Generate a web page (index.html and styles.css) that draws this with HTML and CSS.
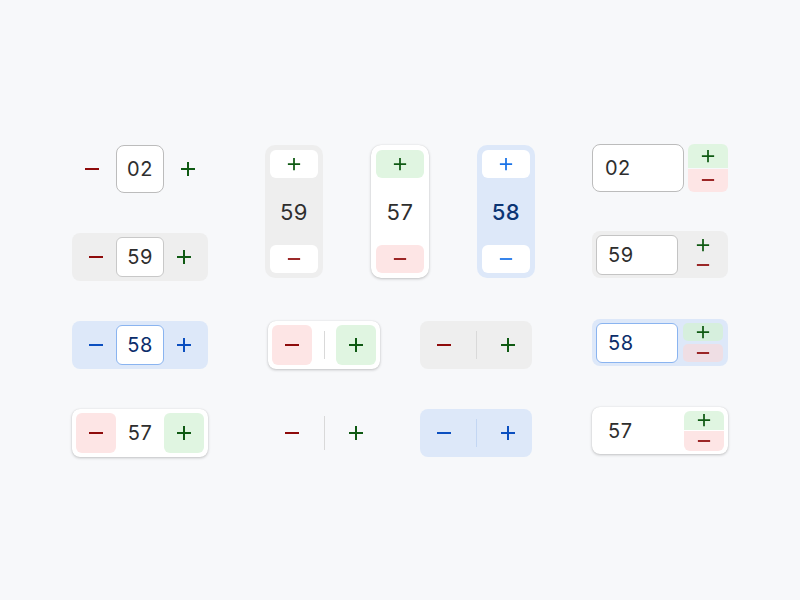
FILE: index.html
```html
<!DOCTYPE html>
<html lang="en">
<head>
<meta charset="utf-8">
<title>Steppers</title>
<link rel="stylesheet" href="styles.css">
</head>
<body>
<svg width="0" height="0" class="defs">
  <symbol id="plus" viewBox="0 0 16 16"><path d="M8 1v14M1 8h14" stroke="currentColor" stroke-width="2" fill="none"/></symbol>
  <symbol id="minus" viewBox="0 0 16 16"><path d="M1 8h14" stroke="currentColor" stroke-width="2" fill="none"/></symbol>
</svg>
<main class="board">

  <!-- column 1 -->
  <div class="cell c1 r1 spread">
    <span class="ic red"><svg class="i16"><use href="#minus"/></svg></span>
    <div class="field tall">02</div>
    <span class="ic green"><svg class="i16"><use href="#plus"/></svg></span>
  </div>

  <div class="cell c1 r2 pill gray">
    <span class="btn red"><svg class="i16"><use href="#minus"/></svg></span>
    <div class="field">59</div>
    <span class="btn green"><svg class="i16"><use href="#plus"/></svg></span>
  </div>

  <div class="cell c1 r3 pill blue">
    <span class="btn bluei"><svg class="i16"><use href="#minus"/></svg></span>
    <div class="field bluefield">58</div>
    <span class="btn bluei"><svg class="i16"><use href="#plus"/></svg></span>
  </div>

  <div class="cell c1 r4 pill card">
    <span class="btn red pinkbg"><svg class="i16"><use href="#minus"/></svg></span>
    <div class="num">57</div>
    <span class="btn green greenbg"><svg class="i16"><use href="#plus"/></svg></span>
  </div>

  <!-- middle: vertical steppers -->
  <div class="cell c2 r12 verts">
    <div class="vert gray">
      <span class="vbtn white green"><svg class="i14"><use href="#plus"/></svg></span>
      <div class="vnum">59</div>
      <span class="vbtn white red"><svg class="i14"><use href="#minus"/></svg></span>
    </div>
    <div class="vert card">
      <span class="vbtn greenbg green"><svg class="i14"><use href="#plus"/></svg></span>
      <div class="vnum">57</div>
      <span class="vbtn pinkbg red"><svg class="i14"><use href="#minus"/></svg></span>
    </div>
    <div class="vert blue">
      <span class="vbtn white vblue"><svg class="i14"><use href="#plus"/></svg></span>
      <div class="vnum navy">58</div>
      <span class="vbtn white vblue"><svg class="i14"><use href="#minus"/></svg></span>
    </div>
  </div>

  <!-- middle: segmented pairs -->
  <div class="cell c2 r3 pair">
    <div class="seg card">
      <span class="btn red pinkbg"><svg class="i16"><use href="#minus"/></svg></span>
      <span class="divider"></span>
      <span class="btn green greenbg"><svg class="i16"><use href="#plus"/></svg></span>
    </div>
    <div class="seg gray">
      <span class="btn red"><svg class="i16"><use href="#minus"/></svg></span>
      <span class="divider"></span>
      <span class="btn green"><svg class="i16"><use href="#plus"/></svg></span>
    </div>
  </div>

  <div class="cell c2 r4 pair">
    <div class="seg">
      <span class="btn red"><svg class="i16"><use href="#minus"/></svg></span>
      <span class="divider long"></span>
      <span class="btn green"><svg class="i16"><use href="#plus"/></svg></span>
    </div>
    <div class="seg blue">
      <span class="btn bluei"><svg class="i16"><use href="#minus"/></svg></span>
      <span class="divider bluediv"></span>
      <span class="btn bluei"><svg class="i16"><use href="#plus"/></svg></span>
    </div>
  </div>

  <!-- column 3 -->
  <div class="cell c3 r1 combo">
    <div class="input big">02</div>
    <div class="stack joined">
      <span class="sbtn greenbg green top"><svg class="i14"><use href="#plus"/></svg></span>
      <span class="sbtn pinkbg red bottom"><svg class="i14"><use href="#minus"/></svg></span>
    </div>
  </div>

  <div class="cell c3 r2 combo boxed gray">
    <div class="input">59</div>
    <div class="stack bare">
      <span class="sic green"><svg class="i14"><use href="#plus"/></svg></span>
      <span class="sic red"><svg class="i14"><use href="#minus"/></svg></span>
    </div>
  </div>

  <div class="cell c3 r3 combo boxed blue">
    <div class="input blueinput">58</div>
    <div class="stack split">
      <span class="sbtn mintbg green"><svg class="i14"><use href="#plus"/></svg></span>
      <span class="sbtn roseb red"><svg class="i14"><use href="#minus"/></svg></span>
    </div>
  </div>

  <div class="cell c3 r4 combo boxed card">
    <div class="plainnum">57</div>
    <div class="stack tight">
      <span class="sbtn greenbg green top"><svg class="i14"><use href="#plus"/></svg></span>
      <span class="sbtn pinkbg red bottom"><svg class="i14"><use href="#minus"/></svg></span>
    </div>
  </div>

</main>
</body>
</html>
```

FILE: styles.css
```css
* { box-sizing: border-box; }

html, body {
  margin: 0;
  background: #f7f8fa;
}

body {
  font-family: Inter, Roboto, "Noto Sans", sans-serif;
  color: #333;
  width: 800px;
  height: 600px;
  overflow: hidden;
  letter-spacing: 0.5px;
}

.defs { position: absolute; }

.board {
  display: grid;
  grid-template-columns: 136px 270px 136px;
  grid-template-rows: repeat(4, 48px);
  column-gap: 57px;
  row-gap: 40px;
  padding: 145px 0 0 72px;
}

.c1 { grid-column: 1; }
.c2 { grid-column: 2; }
.c3 { grid-column: 3; margin-top: -2px; }
.r1 { grid-row: 1; }
.r2 { grid-row: 2; }
.r3 { grid-row: 3; }
.r4 { grid-row: 4; }
.r12 { grid-row: 1 / span 2; }

.i16 { width: 16px; height: 16px; display: block; }
.i14 { width: 14px; height: 14px; display: block; }

.red { color: #8e0b0b; }
.green { color: #0f5a13; }
.bluei { color: #0b4fc0; }
.vblue { color: #1a73e8; }

.gray { background: #eeeeee; }
.blue { background: #dde8f9; }
.card {
  background: #fff;
  box-shadow: 0 1px 3px rgba(0, 0, 0, 0.22), 0 0 1px rgba(0, 0, 0, 0.12);
}
.white { background: #fff; }
.pinkbg { background: #fde5e5; }
.greenbg { background: #e0f5e1; }
.mintbg { background: #d6efdd; }
.roseb { background: #efdee4; }

/* column 1 */
.spread {
  display: flex;
  align-items: center;
  justify-content: center;
  gap: 16px;
}

.ic {
  display: flex;
  align-items: center;
  justify-content: center;
}

.field {
  width: 48px;
  height: 40px;
  background: #fff;
  border: 1px solid #c8c8c8;
  border-radius: 6px;
  display: flex;
  align-items: center;
  justify-content: center;
  font-size: 20px;
  color: #2e2e2e;
}

.field.tall {
  height: 48px;
  border-color: #bcbcbc;
  border-radius: 8px;
}

.bluefield {
  border-color: #8ab4f0;
  color: #0b2d6b;
}

.pill {
  display: flex;
  align-items: center;
  padding: 0 4px;
  border-radius: 8px;
}

.btn {
  width: 40px;
  height: 40px;
  border-radius: 6px;
  display: flex;
  align-items: center;
  justify-content: center;
  flex: none;
}

.num {
  width: 48px;
  text-align: center;
  font-size: 20px;
  color: #2e2e2e;
}

/* vertical steppers */
.verts {
  display: flex;
  justify-content: center;
  gap: 48px;
  align-items: flex-start;
}

.vert {
  width: 58px;
  height: 133px;
  padding: 5px;
  border-radius: 10px;
  display: flex;
  flex-direction: column;
  align-items: center;
  justify-content: space-between;
}

.vbtn {
  width: 48px;
  height: 28px;
  border-radius: 6px;
  display: flex;
  align-items: center;
  justify-content: center;
}

.vnum {
  font-size: 22px;
  color: #2e2e2e;
  line-height: 1;
}

.vnum.navy {
  color: #0b3474;
  font-weight: 500;
}

/* segmented pairs */
.pair {
  display: flex;
  justify-content: center;
  gap: 40px;
}

.seg {
  width: 112px;
  height: 48px;
  padding: 4px;
  border-radius: 8px;
  display: flex;
  align-items: center;
  justify-content: space-between;
}

.divider {
  width: 1px;
  height: 28px;
  background: #d9d9d9;
}

.divider.long { height: 34px; }
.bluediv { background: #c3d6f3; }

/* column 3 */
.combo {
  display: flex;
  align-items: center;
  gap: 4px;
}

.combo.boxed {
  padding: 4px;
  border-radius: 8px;
  height: 47px;
}

.input {
  width: 82px;
  height: 40px;
  background: #fff;
  border: 1px solid #c4c4c4;
  border-radius: 6px;
  display: flex;
  align-items: center;
  padding-left: 11px;
  font-size: 20px;
  color: #2e2e2e;
}

.input.big {
  width: 92px;
  height: 48px;
  border-color: #bcbcbc;
  border-radius: 8px;
  padding-left: 12px;
}

.blueinput {
  border-color: #8ab4f0;
  color: #0b2d6b;
}

.plainnum {
  flex: 1;
  font-size: 20px;
  color: #2e2e2e;
  padding-left: 12px;
}

.stack {
  width: 40px;
  display: flex;
  flex-direction: column;
}

.stack.joined { height: 48px; gap: 1px; }
.stack.joined .sbtn { height: 24px; }

.stack.split { height: 39px; gap: 3px; margin-left: 1px; }
.stack.split .sbtn { height: 18px; border-radius: 5px; }

.stack.tight { height: 40px; gap: 1px; margin-left: auto; }
.stack.tight .sbtn { height: 20px; }

.stack.bare {
  flex: 1;
  height: 40px;
  align-items: center;
  justify-content: center;
  gap: 6px;
}

.sbtn {
  width: 40px;
  display: flex;
  align-items: center;
  justify-content: center;
}

.sbtn.top { border-radius: 6px 6px 0 0; }
.sbtn.bottom { border-radius: 0 0 6px 6px; }

.sic {
  display: flex;
  align-items: center;
  justify-content: center;
}
```
